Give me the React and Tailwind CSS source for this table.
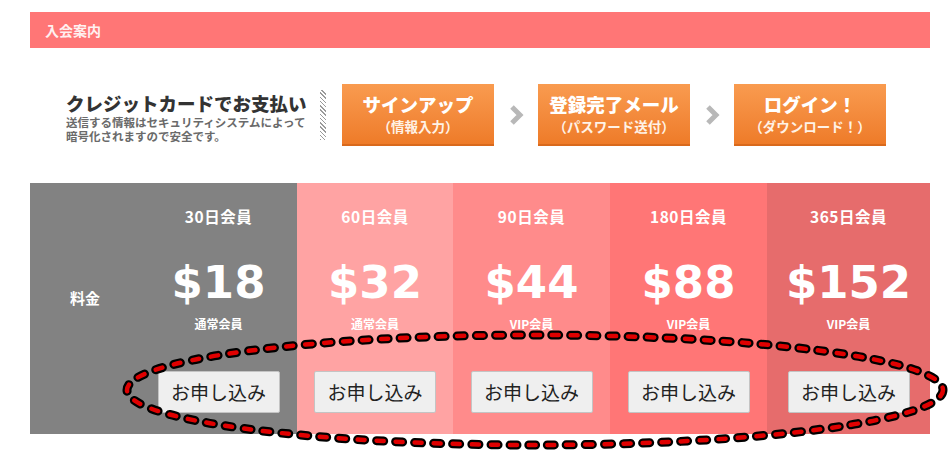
import React from "react";

const jp = { fontFamily: '"Noto Sans CJK JP", "Noto Sans", sans-serif' };

function Chevron() {
  return (
    <div className="w-[44px] flex justify-center">
      <svg width="16" height="24" viewBox="0 0 16 24">
        <polyline points="4,4 12,12 4,20" fill="none" stroke="#b8b8b8" strokeWidth="5" strokeLinejoin="miter" />
      </svg>
    </div>
  );
}

function StepButton({ title, sub }) {
  return (
    <div className="w-[152px] h-[62px] flex flex-col items-center justify-center bg-gradient-to-b from-[#f99b4f] to-[#ee7b28] border-b-2 border-[#d9691c]">
      <div className="text-white font-black text-[18.5px] leading-[25px]">{title}</div>
      <div className="text-[#fff2e6] font-bold text-[13.5px] leading-[19px]">{sub}</div>
    </div>
  );
}

const cols = [
  { days: "30日会員", price: "$18", kind: "通常会員", bg: "bg-[#828282]" },
  { days: "60日会員", price: "$32", kind: "通常会員", bg: "bg-[#ffa3a3]" },
  { days: "90日会員", price: "$44", kind: "VIP会員", bg: "bg-[#ff8b8b]" },
  { days: "180日会員", price: "$88", kind: "VIP会員", bg: "bg-[#ff7676]" },
  { days: "365日会員", price: "$152", kind: "VIP会員", bg: "bg-[#e66c6c]" },
];

export default function App() {
  return (
    <div className="relative w-[952px] h-[464px] bg-white overflow-hidden" style={jp}>
      <div className="ml-[30px] w-[900px] pt-[12px]">
        <div className="h-[36px] bg-[#ff7676] flex items-center pl-[15px]">
          <span className="text-[#fff0f0] font-bold text-[14px]">入会案内</span>
        </div>

        <div className="mt-[36px] flex items-center h-[62px] pl-[36px]">
          <div className="w-[254px] flex flex-col pt-[3px]">
            <div className="text-[#333] font-black text-[18.5px] leading-[24px] whitespace-nowrap">クレジットカードでお支払い</div>
            <div className="text-[#6a6a6a] font-bold text-[11.5px] leading-[14px] whitespace-nowrap">送信する情報はセキュリティシステムによって</div>
            <div className="text-[#6a6a6a] font-bold text-[11.5px] leading-[14px] whitespace-nowrap">暗号化されますので安全です。</div>
          </div>
          <div className="w-[6px] h-[50px] bg-[repeating-linear-gradient(45deg,#9a9a9a_0px,#9a9a9a_1px,transparent_1px,transparent_3px)]" />
          <div className="ml-[16px] flex items-center">
            <StepButton title="サインアップ" sub="（情報入力）" />
            <Chevron />
            <StepButton title="登録完了メール" sub="（パスワード送付）" />
            <Chevron />
            <StepButton title="ログイン！" sub="（ダウンロード！）" />
          </div>
        </div>

        <div className="mt-[37px] grid grid-cols-[110px_157px_156px_157px_157px_163px] h-[251px]">
          <div className="bg-[#828282] flex justify-center pt-[106px]">
            <span className="text-white font-bold text-[15px] leading-[18px]">料金</span>
          </div>
          {cols.map((c) => (
            <div key={c.days} className={`${c.bg} flex flex-col items-center pt-[24px]`}>
              <div className="text-white font-bold text-[15.5px] leading-[18px] tracking-[0.5px]">{c.days}</div>
              <div
                className="text-white font-bold text-[45px] leading-[50px] mt-[33px]"
                style={{ fontFamily: '"DejaVu Sans", Verdana, sans-serif' }}
              >
                {c.price}
              </div>
              <div className="text-white font-bold text-[12px] leading-[14px] mt-[9px]">{c.kind}</div>
              <button className="mt-[40px] w-[122px] h-[42px] bg-[#efefef] border border-[#c4c4c4] rounded-[2px] text-[#222] text-[19px] font-normal" style={jp}>
                お申し込み
              </button>
            </div>
          ))}
        </div>
      </div>

      <svg className="absolute left-0 top-0 pointer-events-none" width="952" height="464">
        <ellipse cx="535" cy="390" rx="408" ry="55" fill="none" stroke="#000" strokeWidth="9" strokeDasharray="7 12" strokeLinecap="round" />
        <ellipse cx="535" cy="390" rx="408" ry="55" fill="none" stroke="#e00000" strokeWidth="4.5" strokeDasharray="7 12" strokeLinecap="round" />
      </svg>
    </div>
  );
}
